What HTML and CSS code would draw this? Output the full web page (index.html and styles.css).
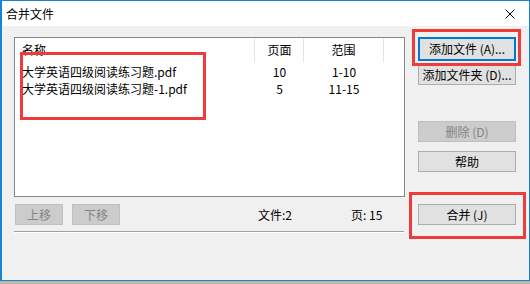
FILE: index.html
```html
<!DOCTYPE html>
<html lang="zh-CN">
  <head>
    <meta charset="UTF-8" />
    <meta name="viewport" content="width=device-width, initial-scale=1.0" />
    <title>合并文件</title>
    <link rel="stylesheet" href="styles.css">
  </head>
  <body>
    <div class="window">
      <div class="titlebar">
        <span class="title">合并文件</span>
        <svg class="close" width="10" height="10" viewBox="0 0 10 10">
          <path d="M0.5 0.5 L9.5 9.5 M9.5 0.5 L0.5 9.5" stroke="#000" stroke-width="1" fill="none" />
        </svg>
      </div>
      <div class="client">
        <div class="main">
          <div class="listbox">
            <div class="list-head">
              <span class="col-name">名称</span>
              <span class="col-pages">页面</span>
              <span class="col-range">范围</span>
            </div>
            <div class="list-row">
              <span class="col-name">大学英语四级阅读练习题.pdf</span>
              <span class="col-pages">10</span>
              <span class="col-range">1-10</span>
            </div>
            <div class="list-row">
              <span class="col-name">大学英语四级阅读练习题-1.pdf</span>
              <span class="col-pages">5</span>
              <span class="col-range">11-15</span>
            </div>
          </div>
          <div class="status">
            <button class="btn btn-small" disabled>上移</button>
            <button class="btn btn-small" disabled>下移</button>
            <span class="count">文件:2</span>
            <span class="total">页: 15</span>
          </div>
          <div class="sep"></div>
        </div>
        <div class="side">
          <button class="btn btn-focus">添加文件 (A)...</button>
          <button class="btn btn-folder">添加文件夹 (D)...</button>
          <button class="btn btn-delete" disabled>删除 (D)</button>
          <button class="btn btn-help">帮助</button>
          <button class="btn btn-merge">合并 (J)</button>
        </div>
      </div>
      <!-- 标注框 -->
      <div class="mark mark-files"></div>
      <div class="mark mark-add"></div>
      <div class="mark mark-merge"></div>
    </div>
  </body>
</html>
```

FILE: styles.css
```css
* {
  margin: 0;
  padding: 0;
  box-sizing: border-box;
}
body {
  background: #bdb5a6;
  font-family: "Noto Sans CJK SC", "Noto Sans", sans-serif;
  font-size: 12px;
  color: #000;
  width: 530px;
  height: 284px;
  overflow: hidden;
}
.window {
  position: relative;
  width: 530px;
  height: 281px;
  border: 1px solid #1883d7;
  border-left-width: 2px;
  background: #f0f0f0;
}
.titlebar {
  height: 25px;
  background: #fff;
  display: flex;
  align-items: center;
  justify-content: space-between;
  padding: 0 14px 0 4px;
}
.title {
  font-size: 12px;
  line-height: 25px;
}
.close {
  display: block;
}
.client {
  display: flex;
  gap: 13px;
  padding: 11px 0 0 12px;
}
.main {
  width: 391px;
}
.listbox {
  height: 160px;
  border: 1px solid #828790;
  background: #fff;
}
.list-head,
.list-row {
  display: flex;
}
.list-head {
  height: 25px;
  line-height: 24px;
}
.list-head span {
  border-right: 1px solid #e5e5e5;
  margin-bottom: 1px;
}
.list-row {
  height: 17px;
  line-height: 17px;
}
.col-name {
  width: 240px;
  padding-left: 7px;
  white-space: nowrap;
}
.col-pages {
  width: 49px;
  text-align: center;
}
.col-range {
  width: 80px;
  text-align: center;
}
.list-head .col-pages {
  padding-left: 1px;
}
.status {
  display: flex;
  align-items: center;
  height: 21px;
  margin-top: 7px;
  padding-left: 1px;
}
.btn {
  display: block;
  height: 21px;
  background: #e1e1e1;
  border: 1px solid #adadad;
  font-family: "Noto Sans CJK SC", "Noto Sans", sans-serif;
  font-size: 12px;
  line-height: 19px;
  color: #000;
  text-align: center;
}
.btn:disabled {
  background: #cccccc;
  border-color: #bfbfbf;
  color: #838383;
}
.btn-small {
  width: 48px;
  margin-right: 9px;
}
.count {
  margin-left: 129px;
  width: 93px;
}
.total {
  white-space: nowrap;
}
.sep {
  margin-top: 6px;
  width: 390px;
  height: 2px;
  border-top: 1px solid #a0a0a0;
  border-bottom: 1px solid #fff;
}
.side {
  width: 98px;
  display: flex;
  flex-direction: column;
}
.side .btn {
  width: 98px;
}
.btn-focus {
  margin-top: 0;
  height: 24px;
  border: 2px solid #0078d7;
  line-height: 20px;
}
.btn-folder {
  margin-top: 3px;
}
.btn-delete {
  margin-top: 36px;
}
.btn-help {
  margin-top: 9px;
}
.btn-merge {
  margin-top: 32px;
}
.mark {
  position: absolute;
  border: 3px solid #ef3b3b;
}
.mark-files {
  left: 18px;
  top: 51px;
  width: 186px;
  height: 68px;
}
.mark-add {
  left: 410px;
  top: 28px;
  width: 109px;
  height: 37px;
}
.mark-merge {
  left: 407px;
  top: 191px;
  width: 117px;
  height: 47px;
}
```
